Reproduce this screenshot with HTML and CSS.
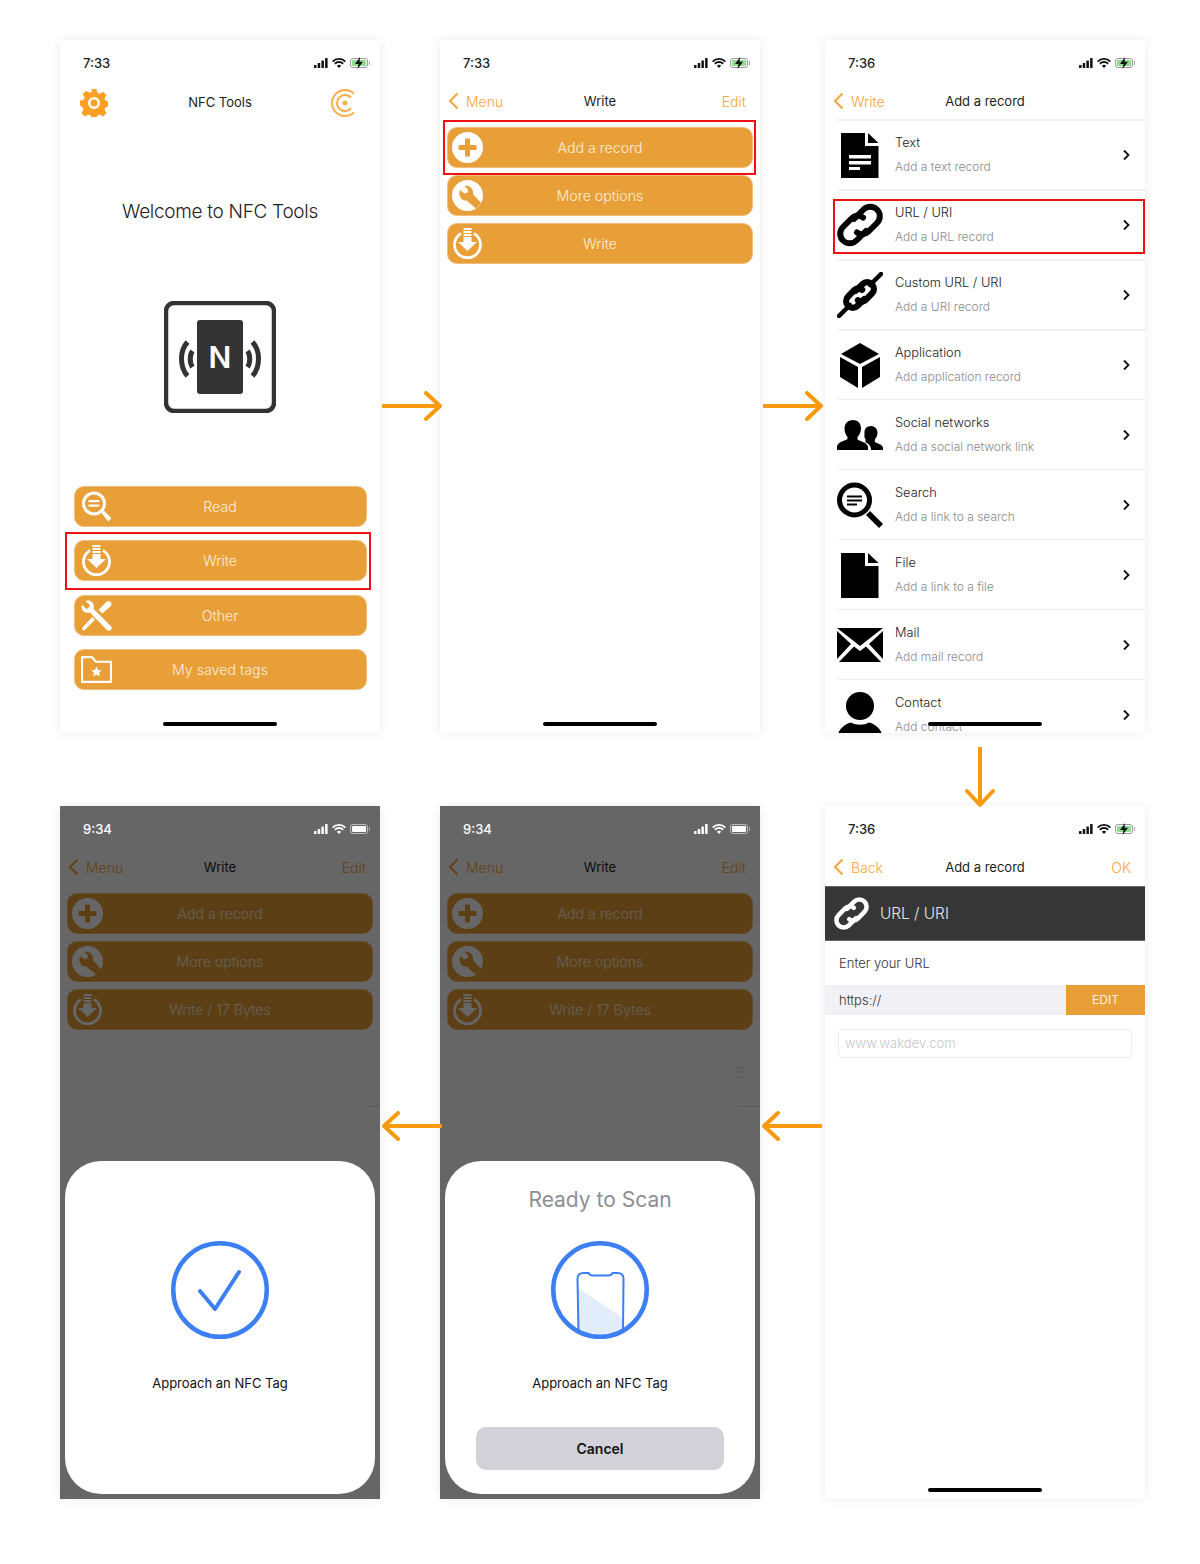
FILE: index.html
```html
<!DOCTYPE html>
<html lang="en">
<head>
    <meta charset="UTF-8">
    <meta name="viewport" content="width=device-width, initial-scale=1.0">
    <title>NFC Tools - write a URL record</title>
    <link rel="stylesheet" href="styles.css">
</head>
<body>

    <!-- shared icons -->
    <svg class="defs" width="0" height="0">
        <symbol id="i-signal" viewBox="0 0 14 10"><rect x="0" y="7" width="2.500" height="3" rx=".5"/><rect x="3.700" y="5" width="2.500" height="5" rx=".5"/><rect x="7.400" y="2.500" width="2.500" height="7.500" rx=".5"/><rect x="11.100" y="0" width="2.500" height="10" rx=".5"/></symbol>
        <symbol id="i-wifi" viewBox="0 0 14 10"><path d="M7 10 4.900 7.800a3 3 0 0 1 4.200 0Z"/><path d="M3.500 6.400 2.200 5.100a6.800 6.800 0 0 1 9.600 0L10.500 6.400a5 5 0 0 0-7 0Z"/><path d="M1.300 4.200 0 2.900a9.900 9.900 0 0 1 14 0L12.700 4.200a8.100 8.100 0 0 0-11.400 0Z"/></symbol>
        <symbol id="i-read" viewBox="0 0 30 31"><circle cx="12.500" cy="12.500" r="10.500" fill="none" stroke="currentColor" stroke-width="3"/><rect x="7" y="9" width="11" height="2.200"/><rect x="7" y="13.500" width="11" height="2.200"/><path d="m20 22 2.500-2.500 7.500 7.700-3.200 3.200Z"/></symbol>
        <symbol id="i-write" viewBox="0 0 30 31"><path d="M8.500 5.500a13 13 0 1 0 13 0" fill="none" stroke="currentColor" stroke-width="2.800"/><rect x="11" y="0" width="8" height="2"/><rect x="11" y="3" width="8" height="2"/><rect x="11" y="6" width="8" height="2"/><path d="M11 9h8v5h5.500L15 23 5.500 14H11Z"/></symbol>
        <symbol id="i-tools" viewBox="0 0 30 30"><path d="M1 4.500 5.500 9l3.500-3.500L4.500 1C8.500-.5 12.500 2 12.500 6.500c0 1-.2 1.500-.4 2l17 17c1.200 1.500.5 3-.5 3.700-1 .8-2.500.8-3.500-.2L8.500 12c-4 1.500-9.300-2-7.500-7.500Z"/><path d="M17 9.500 24.500 2c1.200-1 3-1.200 4.200 0 1.200 1.200 1 3-.2 4.300L20.500 13Z"/><path d="m11 16.500 2.500 2.500-9.500 9.700c-.8.800-1.800.8-2.500.1-.7-.7-.6-1.700.2-2.500Z"/></symbol>
        <symbol id="i-folder" viewBox="0 0 30 26"><path d="M1 1h9.500l4 4.500H29V25H1Z" fill="none" stroke="currentColor" stroke-width="2"/><path d="m15 10 1.500 3.400 3.700.3-2.800 2.400.9 3.600-3.300-1.900-3.300 1.900.9-3.600-2.800-2.400 3.700-.3Z"/></symbol>
        <symbol id="i-plus" viewBox="0 0 31 31"><path fill-rule="evenodd" d="M15.500 0a15.500 15.500 0 1 1 0 31 15.500 15.500 0 0 1 0-31ZM13 6.500v6.500H6.500v5H13v6.500h5V18h6.500v-5H18V6.500Z"/></symbol>
        <symbol id="i-options" viewBox="0 0 31 31"><path fill-rule="evenodd" d="M15.500 0a15.500 15.500 0 1 1 0 31 15.500 15.500 0 0 1 0-31ZM8 10l4.500 3.500 3-1 .5-3L12.500 6c5-1.500 9.500 3 8.500 8L29 23l-5 5.500-9.500-8C9.500 21.500 6 15.500 8 10Z"/></symbol>
        <symbol id="i-text" viewBox="0 0 46 46"><path fill-rule="evenodd" d="M4 1h24v13h13.500v32H4ZM12 23v3.500h22V23Zm0 6v3.500h22V29Zm0 6v3h11v-3Z"/><path d="M31 1 41.500 11H31Z"/></symbol>
        <symbol id="i-file" viewBox="0 0 46 46"><path d="M4 1h24v13h13.500v32H4Z"/><path d="M31 1 41.500 11H31Z"/></symbol>
        <symbol id="i-link" viewBox="0 0 46 46"><g fill="none" stroke="currentColor" stroke-width="6" stroke-linecap="round"><path d="M17 17 26.500 7.500A9.500 9.500 0 0 1 40 21L31 30c-3 3-8 3-11 .5"/><path d="M29 29 19.500 38.500A9.500 9.500 0 0 1 6 25L15 16c3-3 8-3 11-.5"/></g></symbol>
        <symbol id="i-chain" viewBox="0 0 46 46"><g fill="none" stroke="currentColor" stroke-linecap="round"><path d="M33 13 44 2M2 44l11-11" stroke-width="4.500"/><g transform="translate(23 23) scale(.7) translate(-23 -23)" stroke-width="9"><path d="M17 17 26.500 7.500A9.500 9.500 0 0 1 40 21L31 30c-3 3-8 3-11 .5"/><path d="M29 29 19.500 38.500A9.500 9.500 0 0 1 6 25L15 16c3-3 8-3 11-.5"/></g></g></symbol>
        <symbol id="i-box" viewBox="0 0 46 46"><path d="M23 1 42 12 23 22 4 12Z"/><path d="M3 15 21 25V46L3 35Z"/><path d="M43 15 25 25V46L43 35Z"/></symbol>
        <symbol id="i-people" viewBox="0 0 46 46"><path d="M16 8c5 0 8 3.500 8 8.500 0 4-1.800 6.500-3.500 8.500v2.500c2.500 1.800 10 3 10.500 7.500V38H0v-3.500C.5 30 8 28.800 10.500 27v-2C9 23 7.500 20.500 7.500 16.500 7.500 11.500 11 8 16 8Z"/><path d="M34 14c4 0 6.500 3 6.500 6.800 0 3-1.200 5-2.700 6.700v2.500c2 1.500 8 2.300 8.200 6V38H34c0-4-2-6-5.500-7.700v-3.300c-1.500-1.700-1-3-1-7.200C27.500 17 30 14 34 14Z"/></symbol>
        <symbol id="i-search" viewBox="0 0 46 46"><circle cx="17.500" cy="18" r="15" fill="none" stroke="currentColor" stroke-width="5"/><rect x="10" y="13.500" width="15" height="2"/><rect x="10" y="17.500" width="15" height="2"/><rect x="10" y="21.500" width="10" height="2"/><path d="m29 33 4-4 13 13-4 4Z"/></symbol>
        <symbol id="i-mail" viewBox="0 0 46 46"><path d="M0 6h46L23 24Z"/><path d="M0 9 14 22 0 37Z"/><path d="M46 9 32 22 46 37Z"/><path d="M17 24.500 23 29l6-4.500L44 40H2Z"/></symbol>
        <symbol id="i-person" viewBox="0 0 46 46"><circle cx="23" cy="14" r="14"/><path d="M0 46c1-9 8-14 14-15.500 5 3 13 3 18 0C38 32 45 37 46 46Z"/></symbol>
        <symbol id="i-logo" viewBox="0 0 112 112"><rect x="2" y="2" width="108" height="108" rx="8" fill="none" stroke="currentColor" stroke-width="4.500"/><rect x="33" y="19" width="46" height="74" rx="3"/><g fill="none" stroke="currentColor" stroke-width="5"><path d="M23.500 41c-8 9-8 25 0 34"/><path d="M88.500 41c8 9 8 25 0 34"/><path d="M28.500 50c-3 4-3 12 0 16"/><path d="M83.500 50c3 4 3 12 0 16"/></g></symbol>
        <symbol id="i-arrow" viewBox="0 0 60 30"><path d="M1 15h57M44 2l14 13-14 13" fill="none" stroke="currentColor" stroke-width="4" stroke-linecap="round" stroke-linejoin="round"/></symbol>
    </svg>

    <main class="board">

        <!-- step 1 -->
        <section class="phone">
            <div class="status"><span>7:33</span><div class="status-icons"><svg class="signal"><use href="#i-signal"/></svg><svg class="wifi"><use href="#i-wifi"/></svg><span class="battery charging"><i></i></span></div></div>
            <div class="nav nav-home">
                <svg class="gear" viewBox="0 0 28 28"><path fill-rule="evenodd" d="M11.500 0h5l.8 3.800 2.500 1 3.300-2.100 3.500 3.500-2.100 3.300 1 2.500 3.500.5v5l-3.500.8-1 2.500 2.100 3.300-3.500 3.500-3.300-2.100-2.500 1-.8 3.500h-5l-.8-3.500-2.500-1-3.300 2.100-3.500-3.500 2.100-3.300-1-2.500L0 16.500v-5l3.700-.5 1-2.500-2.100-3.300 3.500-3.500 3.300 2.100 2.500-1ZM14 8a6 6 0 1 0 0 12 6 6 0 0 0 0-12Zm0 2.500a3.500 3.500 0 1 1 0 7 3.500 3.500 0 0 1 0-7Z"/></svg>
                <span class="nav-title">NFC Tools</span>
                <svg class="radar" viewBox="0 0 24 28"><g fill="none" stroke="currentColor" stroke-width="2"><path d="M23 4.600A13 13 0 1 0 23 23.400"/><path d="M20 8.700A8 8 0 1 0 20 19.300"/></g><circle cx="14" cy="14" r="2.500" fill="currentColor"/></svg>
            </div>
            <h1 class="welcome">Welcome to NFC Tools</h1>
            <div class="logo"><svg class="logo-mark"><use href="#i-logo"/></svg><span class="logo-n">N</span></div>
            <div class="btns btns-home">
                <div class="btn"><svg class="btn-icon"><use href="#i-read"/></svg><span>Read</span></div>
                <div class="btn"><svg class="btn-icon"><use href="#i-write"/></svg><span>Write</span><i class="mark mark-home"></i></div>
                <div class="btn"><svg class="btn-icon"><use href="#i-tools"/></svg><span>Other</span></div>
                <div class="btn"><svg class="btn-icon"><use href="#i-folder"/></svg><span>My saved tags</span></div>
            </div>
            <div class="home-bar"></div>
        </section>

        <!-- step 2 -->
        <section class="phone">
            <div class="status"><span>7:33</span><div class="status-icons"><svg class="signal"><use href="#i-signal"/></svg><svg class="wifi"><use href="#i-wifi"/></svg><span class="battery charging"><i></i></span></div></div>
            <div class="nav">
                <span class="nav-side"><svg class="back" viewBox="0 0 11 18"><path d="M9.500 1.500 2 9l7.500 7.500"/></svg>Menu</span>
                <span class="nav-title">Write</span>
                <span class="nav-side nav-right">Edit</span>
            </div>
            <div class="btns btns-write">
                <div class="btn"><svg class="btn-icon"><use href="#i-plus"/></svg><span>Add a record</span><i class="mark mark-write"></i></div>
                <div class="btn"><svg class="btn-icon"><use href="#i-options"/></svg><span>More options</span></div>
                <div class="btn"><svg class="btn-icon"><use href="#i-write"/></svg><span>Write</span></div>
            </div>
            <div class="home-bar"></div>
        </section>

        <!-- step 3 -->
        <section class="phone">
            <div class="status"><span>7:36</span><div class="status-icons"><svg class="signal"><use href="#i-signal"/></svg><svg class="wifi"><use href="#i-wifi"/></svg><span class="battery charging"><i></i></span></div></div>
            <div class="nav">
                <span class="nav-side"><svg class="back" viewBox="0 0 11 18"><path d="M9.500 1.500 2 9l7.500 7.500"/></svg>Write</span>
                <span class="nav-title">Add a record</span>
                <span class="nav-side nav-right"></span>
            </div>
            <ul class="records">
                <li class="record"><svg class="record-icon"><use href="#i-text"/></svg><div class="record-text"><b>Text</b><small>Add a text record</small></div><svg class="chev" viewBox="0 0 8 12"><path d="M2 1.500 6.500 6 2 10.500"/></svg></li>
                <li class="record"><svg class="record-icon"><use href="#i-link"/></svg><div class="record-text"><b>URL / URI</b><small>Add a URL record</small></div><svg class="chev" viewBox="0 0 8 12"><path d="M2 1.500 6.500 6 2 10.500"/></svg><i class="mark mark-row"></i></li>
                <li class="record"><svg class="record-icon"><use href="#i-chain"/></svg><div class="record-text"><b>Custom URL / URI</b><small>Add a URI record</small></div><svg class="chev" viewBox="0 0 8 12"><path d="M2 1.500 6.500 6 2 10.500"/></svg></li>
                <li class="record"><svg class="record-icon"><use href="#i-box"/></svg><div class="record-text"><b>Application</b><small>Add application record</small></div><svg class="chev" viewBox="0 0 8 12"><path d="M2 1.500 6.500 6 2 10.500"/></svg></li>
                <li class="record"><svg class="record-icon"><use href="#i-people"/></svg><div class="record-text"><b>Social networks</b><small>Add a social network link</small></div><svg class="chev" viewBox="0 0 8 12"><path d="M2 1.500 6.500 6 2 10.500"/></svg></li>
                <li class="record"><svg class="record-icon"><use href="#i-search"/></svg><div class="record-text"><b>Search</b><small>Add a link to a search</small></div><svg class="chev" viewBox="0 0 8 12"><path d="M2 1.500 6.500 6 2 10.500"/></svg></li>
                <li class="record"><svg class="record-icon"><use href="#i-file"/></svg><div class="record-text"><b>File</b><small>Add a link to a file</small></div><svg class="chev" viewBox="0 0 8 12"><path d="M2 1.500 6.500 6 2 10.500"/></svg></li>
                <li class="record"><svg class="record-icon"><use href="#i-mail"/></svg><div class="record-text"><b>Mail</b><small>Add mail record</small></div><svg class="chev" viewBox="0 0 8 12"><path d="M2 1.500 6.500 6 2 10.500"/></svg></li>
                <li class="record"><svg class="record-icon"><use href="#i-person"/></svg><div class="record-text"><b>Contact</b><small>Add contact</small></div><svg class="chev" viewBox="0 0 8 12"><path d="M2 1.500 6.500 6 2 10.500"/></svg></li>
            </ul>
            <div class="home-bar"></div>
        </section>

        <!-- step 6: written -->
        <section class="phone">
            <div class="status status-dim"><span>9:34</span><div class="status-icons"><svg class="signal"><use href="#i-signal"/></svg><svg class="wifi"><use href="#i-wifi"/></svg><span class="battery"><i></i></span></div></div>
            <div class="nav">
                <span class="nav-side"><svg class="back" viewBox="0 0 11 18"><path d="M9.500 1.500 2 9l7.500 7.500"/></svg>Menu</span>
                <span class="nav-title">Write</span>
                <span class="nav-side nav-right">Edit</span>
            </div>
            <div class="btns btns-dim">
                <div class="btn"><svg class="btn-icon"><use href="#i-plus"/></svg><span>Add a record</span></div>
                <div class="btn"><svg class="btn-icon"><use href="#i-options"/></svg><span>More options</span></div>
                <div class="btn"><svg class="btn-icon"><use href="#i-write"/></svg><span>Write / 17 Bytes</span></div>
            </div>
            <div class="dim"></div>
            <i class="ghost-line ghost-line-short"></i>
            <div class="sheet">
                <svg class="scan-ring" viewBox="0 0 98 98"><circle cx="49" cy="49" r="46.750" fill="none" stroke="#3b7ff2" stroke-width="4.500"/><path d="M29 50 44 68 68 31" fill="none" stroke="#3b7ff2" stroke-width="4" stroke-linecap="round" stroke-linejoin="round"/></svg>
                <p class="sheet-msg">Approach an NFC Tag</p>
            </div>
        </section>

        <!-- step 5: ready to scan -->
        <section class="phone">
            <div class="status status-dim"><span>9:34</span><div class="status-icons"><svg class="signal"><use href="#i-signal"/></svg><svg class="wifi"><use href="#i-wifi"/></svg><span class="battery"><i></i></span></div></div>
            <div class="nav">
                <span class="nav-side"><svg class="back" viewBox="0 0 11 18"><path d="M9.500 1.500 2 9l7.500 7.500"/></svg>Menu</span>
                <span class="nav-title">Write</span>
                <span class="nav-side nav-right">Edit</span>
            </div>
            <div class="btns btns-dim">
                <div class="btn"><svg class="btn-icon"><use href="#i-plus"/></svg><span>Add a record</span></div>
                <div class="btn"><svg class="btn-icon"><use href="#i-options"/></svg><span>More options</span></div>
                <div class="btn"><svg class="btn-icon"><use href="#i-write"/></svg><span>Write / 17 Bytes</span></div>
            </div>
            <div class="dim"></div>
            <i class="ghost-menu"></i>
            <i class="ghost-line"></i>
            <div class="sheet">
                <h2 class="sheet-title">Ready to Scan</h2>
                <svg class="scan-ring" viewBox="0 0 98 98"><path d="M27 47 72 77 71 90C60 95 38 95 28 90Z" fill="#e1edfb"/><path d="M27.500 91 26.500 38q0-6 6-6h5c1 2 2 2.500 4 2.500h16c2 0 3-.5 4-2.500h5q6 0 6 6L72 91" fill="none" stroke="#3b7ff2" stroke-width="2"/><circle cx="49" cy="49" r="46.750" fill="none" stroke="#3b7ff2" stroke-width="4.500"/></svg>
                <p class="sheet-msg">Approach an NFC Tag</p>
                <div class="sheet-cancel">Cancel</div>
            </div>
        </section>

        <!-- step 4 -->
        <section class="phone">
            <div class="status"><span>7:36</span><div class="status-icons"><svg class="signal"><use href="#i-signal"/></svg><svg class="wifi"><use href="#i-wifi"/></svg><span class="battery charging"><i></i></span></div></div>
            <div class="nav">
                <span class="nav-side"><svg class="back" viewBox="0 0 11 18"><path d="M9.500 1.500 2 9l7.500 7.500"/></svg>Back</span>
                <span class="nav-title">Add a record</span>
                <span class="nav-side nav-right">OK</span>
            </div>
            <div class="form-head"><svg class="form-head-icon"><use href="#i-link"/></svg><span>URL / URI</span></div>
            <p class="form-label">Enter your URL</p>
            <div class="form-scheme"><span>https://</span><b>EDIT</b></div>
            <div class="form-input">www.wakdev.com</div>
            <div class="home-bar"></div>
        </section>

        <!-- arrows between the steps -->
        <svg class="arrow arrow-a"><use href="#i-arrow"/></svg>
        <svg class="arrow arrow-b"><use href="#i-arrow"/></svg>
        <svg class="arrow arrow-c"><use href="#i-arrow"/></svg>
        <svg class="arrow arrow-d"><use href="#i-arrow"/></svg>
        <svg class="arrow arrow-e"><use href="#i-arrow"/></svg>
    </main>

</body>
</html>
```

FILE: styles.css
```css
* {
    box-sizing: border-box;
}
html, body {
    margin: 0;
    padding: 0;
}
body {
    width: 1200px;
    height: 1564px;
    overflow: hidden;
    background: #fff;
    color: #222;
    font-family: Inter, "Liberation Sans", sans-serif;
}
.defs {
    position: absolute;
}

.board {
    position: relative;
    display: grid;
    grid-template-columns: repeat(3, 320px);
    grid-template-rows: repeat(2, 693px);
    column-gap: 60px;
    row-gap: 73px;
    padding: 40px 0 0 60px;
}
.board .phone:nth-of-type(3n) {
    margin-left: 5px;
    margin-right: -5px;
}

.phone {
    position: relative;
    display: flex;
    flex-direction: column;
    overflow: hidden;
    background: #fff;
    box-shadow: 0 0 10px rgba(0, 0, 0, 0.08);
}
.phone > * {
    flex: none;
}

/* status bar */
.status {
    height: 44px;
    padding: 2px 12px 0 23px;
    display: flex;
    align-items: center;
    justify-content: space-between;
    font-size: 13px;
    font-weight: 500;
    color: #222;
}
.status-icons {
    display: flex;
    align-items: center;
    gap: 4px;
    color: #111;
}
.signal {
    width: 14px;
    height: 10px;
    fill: currentColor;
}
.wifi {
    width: 14px;
    height: 10px;
    fill: currentColor;
}
.battery {
    position: relative;
    width: 18px;
    height: 10px;
    border: 1px solid #999;
    border-radius: 3px;
    padding: 1px;
}
.battery i {
    display: block;
    height: 100%;
    border-radius: 1px;
    background: #111;
}
.battery::after {
    content: "";
    position: absolute;
    right: -3px;
    top: 2px;
    width: 1px;
    height: 4px;
    background: #aaa;
}
.battery.charging i {
    background: #8fdc8f;
}
.battery.charging::before {
    content: "";
    position: absolute;
    left: 3px;
    top: -2px;
    width: 10px;
    height: 12px;
    background: #111;
    clip-path: polygon(60% 0, 10% 58%, 45% 58%, 35% 100%, 90% 40%, 55% 40%);
}
.status-dim {
    position: relative;
    z-index: 2;
    color: #fff;
}
.status-dim .status-icons {
    color: #fff;
}
.status-dim .battery {
    border-color: #bbb;
}
.status-dim .battery i {
    background: #fff;
}

/* nav */
.nav {
    height: 36px;
    padding: 0 14px 2px;
    display: grid;
    grid-template-columns: 1fr auto 1fr;
    align-items: center;
    font-size: 14px;
}
.nav-title {
    font-size: 13px;
    font-weight: 400;
    color: #1c1c1c;
}
.nav-side {
    display: flex;
    align-items: center;
    gap: 7px;
    color: #fca439;
    font-weight: 300;
}
.nav-right {
    justify-content: flex-end;
}
.back {
    width: 11px;
    height: 18px;
    margin-left: -6px;
    fill: none;
    stroke: #fca439;
    stroke-width: 2;
}
.nav-home {
    padding: 0 20px;
}
.gear {
    width: 28px;
    height: 28px;
    margin-top: 1px;
    fill: #fb9f25;
}
.radar {
    width: 24px;
    height: 28px;
    margin-top: 1px;
    margin-right: 5px;
    justify-self: end;
    color: #fdab45;
}

/* first screen */
.welcome {
    margin: 0;
    padding-top: 80px;
    text-align: center;
    font-size: 19px;
    letter-spacing: -0.3px;
    line-height: 24px;
    font-weight: 300;
    color: #222;
}
.logo {
    position: relative;
    width: 112px;
    height: 112px;
    margin: 77px auto 0;
    color: #333;
}
.logo-mark {
    display: block;
    width: 112px;
    height: 112px;
    fill: currentColor;
}
.logo-n {
    position: absolute;
    inset: 0;
    display: flex;
    align-items: center;
    justify-content: center;
    color: #fff;
    font-size: 30px;
    font-weight: 600;
}

/* orange buttons */
.btns {
    display: flex;
    flex-direction: column;
}
.btns-home {
    gap: 13.600px;
    margin: 72.500px 13.500px 0;
}
.btns-write,
.btns-dim {
    gap: 7px;
    margin: 7px 7px 0;
}
.btn {
    position: relative;
    height: 41px;
    display: grid;
    grid-template-columns: 1fr auto 1fr;
    align-items: center;
    border: 1px solid #efbd78;
    border-radius: 10px;
    background: #e99f38;
    color: #fbeedb;
    font-size: 14.200px;
    font-weight: 300;
}
.btn span {
    grid-column: 2;
    grid-row: 1;
}
.btn-icon {
    grid-column: 1;
    grid-row: 1;
    width: 31px;
    height: 31px;
    margin-left: 4px;
    color: #fff;
    fill: #fff;
}
.btns-home .btn-icon {
    margin-left: 6.500px;
}

/* red highlights */
.mark {
    position: absolute;
    border: 2px solid #ee1111;
}
.mark-home {
    inset: -9px -5px -10px -9.500px;
}
.mark-write {
    inset: -8.500px -3.500px -7.500px -5px;
}
.mark-row {
    inset: 8px 0 5.500px -5px;
}

/* record list */
.records {
    list-style: none;
    margin: -1px 0 0;
    padding: 0;
}
.record {
    position: relative;
    height: 70px;
    margin-left: 13px;
    padding-right: 15px;
    display: flex;
    align-items: center;
    border-top: 1px solid #ececec;
}
.record:nth-child(-n+4) {
    border-top-width: 2px;
    border-top-color: #f1f1f1;
}
.record-icon {
    flex: none;
    width: 46px;
    height: 46px;
    margin-left: -1px;
    color: #000;
    fill: #000;
}
.record-text {
    flex: 1;
    margin-left: 12px;
    display: flex;
    flex-direction: column;
    gap: 8px;
}
.record-text b {
    font-size: 12.800px;
    line-height: 16px;
    font-weight: 300;
    color: #222;
}
.record-text small {
    font-size: 12px;
    line-height: 16px;
    font-weight: 300;
    color: #8a8a8a;
}
.chev {
    width: 8px;
    height: 12px;
    fill: none;
    stroke: #111;
    stroke-width: 1.800;
}

.home-bar {
    position: absolute;
    left: 103px;
    top: 682px;
    width: 114px;
    height: 4px;
    border-radius: 2px;
    background: #000;
}

/* url form */
.form-head {
    height: 55px;
    padding-left: 9px;
    display: flex;
    align-items: center;
    gap: 11px;
    background: #363636;
    border-top: 1px solid #666;
    border-bottom: 1px solid #666;
    color: #e6e6e6;
    font-size: 15.400px;
    font-weight: 300;
}
.form-head-icon {
    width: 35px;
    height: 35px;
    color: #fff;
}
.form-label {
    margin: 0;
    padding: 14px 14px 0;
    height: 44px;
    font-size: 13px;
    line-height: 16px;
    font-weight: 300;
    color: #333;
}
.form-scheme {
    height: 30px;
    padding-left: 14px;
    display: flex;
    align-items: center;
    justify-content: space-between;
    background: #f0f0f5;
    font-size: 13px;
    font-weight: 300;
    color: #333;
}
.form-scheme b {
    width: 79px;
    height: 30px;
    line-height: 30px;
    text-align: center;
    background: #e99f38;
    color: #fbeedb;
    font-size: 12px;
    font-weight: 400;
}
.form-input {
    height: 29px;
    margin: 14px 13px 0;
    padding-left: 6px;
    border: 1px solid #ececec;
    border-radius: 4px;
    line-height: 27px;
    font-size: 13px;
    font-weight: 300;
    color: #c6c6c6;
}

/* nfc sheet */
.dim {
    position: absolute;
    inset: 0;
    background: rgba(0, 0, 0, 0.6);
}
.ghost-menu {
    position: absolute;
    left: 297px;
    top: 261px;
    width: 7px;
    height: 11px;
    background: repeating-linear-gradient(#5c5c5c 0 2px, transparent 2px 4.500px);
}
.ghost-line {
    position: absolute;
    left: 297px;
    top: 300px;
    width: 23px;
    height: 1px;
    background: #5a5a5a;
}
.ghost-line-short {
    left: 307px;
    width: 13px;
}
.sheet {
    position: absolute;
    left: 5px;
    right: 5px;
    bottom: 5px;
    height: 333px;
    padding-top: 80px;
    display: flex;
    flex-direction: column;
    align-items: center;
    background: #fff;
    border-radius: 36px;
}
.sheet-title {
    position: absolute;
    top: 26px;
    left: 0;
    right: 0;
    margin: 0;
    text-align: center;
    font-size: 21px;
    line-height: 26px;
    font-weight: 400;
    color: #8e8e93;
}
.scan-ring {
    width: 98px;
    height: 98px;
}
.sheet-msg {
    margin: 35px 0 0;
    font-size: 13px;
    line-height: 18px;
    font-weight: 400;
    color: #111;
}
.sheet-cancel {
    width: 248px;
    height: 43px;
    margin-top: 35px;
    border-radius: 10px;
    background: #d2d2d8;
    text-align: center;
    line-height: 43px;
    font-size: 14px;
    font-weight: 600;
    color: #111;
}

/* arrows */
.arrow {
    position: absolute;
    width: 60px;
    height: 30px;
    color: #f99a0c;
}
.arrow-a {
    left: 382px;
    top: 391px;
}
.arrow-b {
    left: 763px;
    top: 391px;
}
.arrow-c {
    left: 950px;
    top: 762px;
    transform: rotate(90deg);
}
.arrow-d {
    left: 762px;
    top: 1111px;
    transform: rotate(180deg);
}
.arrow-e {
    left: 382px;
    top: 1111px;
    transform: rotate(180deg);
}
```
